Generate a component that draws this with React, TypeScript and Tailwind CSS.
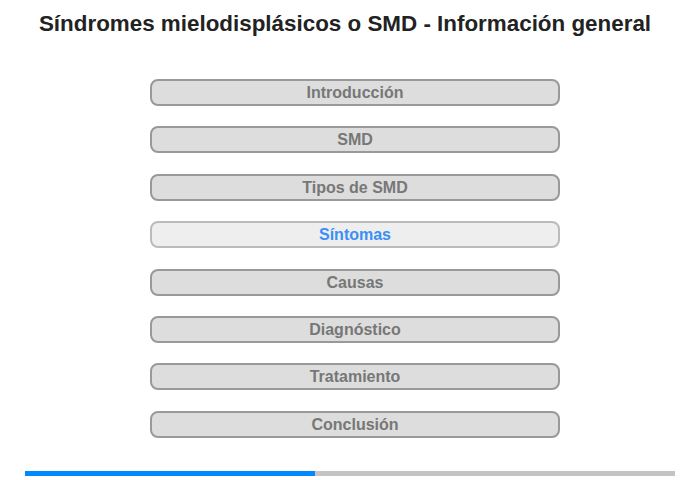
import React from "react";

const items = [
  "Introducción",
  "SMD",
  "Tipos de SMD",
  "Síntomas",
  "Causas",
  "Diagnóstico",
  "Tratamiento",
  "Conclusión",
];

export default function App() {
  return (
    <div
      className="w-[700px] h-[480px] bg-white flex flex-col"
      style={{ fontFamily: '"Liberation Sans", Arial, sans-serif' }}
    >
      <h1 className="pt-[11px] h-[25px] box-content text-center text-[22.4px] leading-[25px] font-bold text-[#222] pr-[10px]">
        Síndromes mielodisplásicos o SMD - Información general
      </h1>
      <div className="mt-[43px] ml-[150px] w-[410px] flex flex-col gap-[20.4px]">
        {items.map((t) => {
          const active = t === "Síntomas";
          return (
            <div
              key={t}
              className={
                active
                  ? "h-[27px] pt-[1px] rounded-[8px] border-2 border-[#bbbbbb] bg-[#eeeeee] text-[#3a8ef6] flex items-center justify-center text-[16px] font-bold"
                  : "h-[27px] pt-[1px] rounded-[8px] border-2 border-[#999999] bg-[#dddddd] text-[#777777] flex items-center justify-center text-[16px] font-bold"
              }
            >
              {t}
            </div>
          );
        })}
      </div>
      <div className="mt-[33px] ml-[25px] w-[650px] h-[5px] bg-[#c4c4c4] flex">
        <div className="w-[290px] h-full bg-[#0088ff]" />
      </div>
    </div>
  );
}
